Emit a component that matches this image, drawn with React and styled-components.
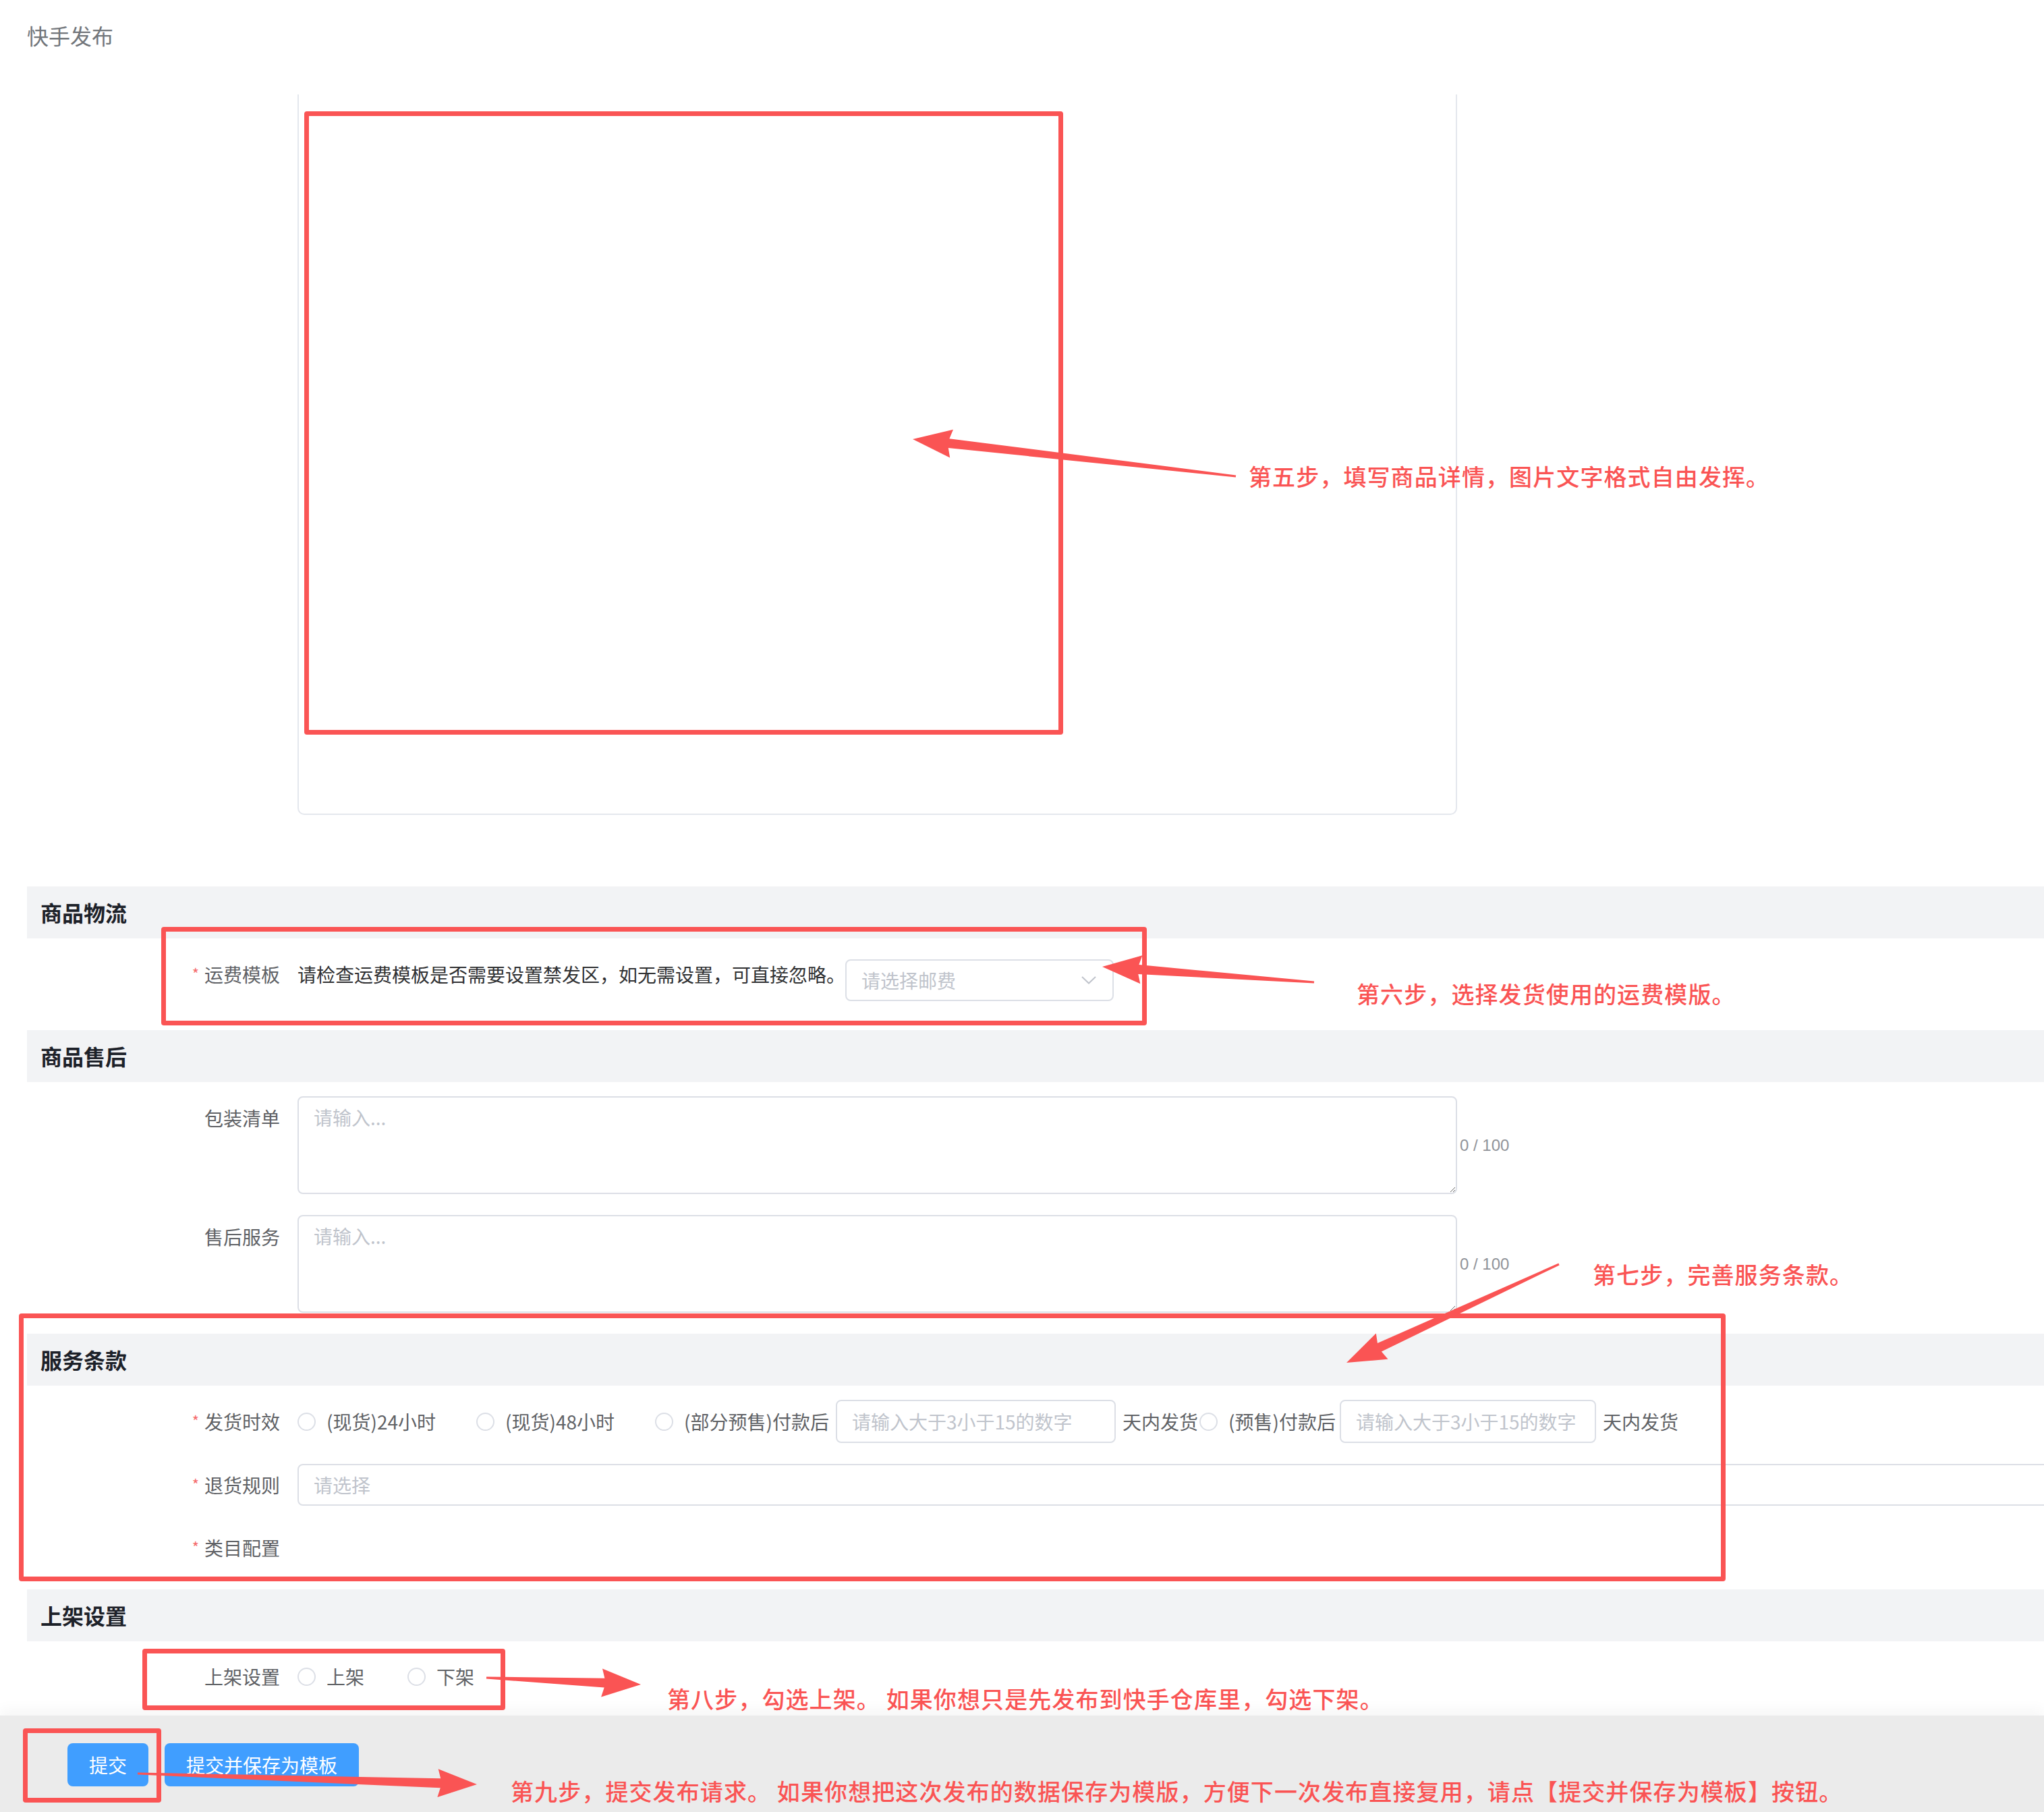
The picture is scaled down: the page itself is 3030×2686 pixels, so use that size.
import React from "react";
import styled, { createGlobalStyle } from "styled-components";

const GlobalStyle = createGlobalStyle`
  html, body {
    margin: 0;
    padding: 0;
    background: #fff;
  }
  * {
    box-sizing: border-box;
  }
`;

const RED = "#fa5454";

const Page = styled.div`
  position: relative;
  width: 3030px;
  min-height: 2686px;
  overflow: hidden;
  font-family: "Noto Sans CJK SC", "Noto Sans", sans-serif;
  color: #606266;
`;

const PageTitle = styled.div`
  height: 140px;
  padding: 30px 0 0 40px;
  font-size: 32px;
  line-height: 44px;
  color: #72767b;
`;

const EditorBox = styled.div`
  margin-left: 441px;
  width: 1719px;
  height: 1068px;
  border: 2px solid #e4e7ed;
  border-top: none;
  border-radius: 0 0 10px 10px;
`;

const Section = styled.section`
  margin-left: 40px;
  margin-top: ${(p) => p.$offset || 0}px;
`;

const SectionHead = styled.div`
  height: 77px;
  padding-left: 20px;
  background: #f2f3f5;
  font-size: 32px;
  font-weight: 700;
  line-height: 77px;
  color: #1d2129;
`;

const SectionBody = styled.div`
  padding: ${(p) => p.$top}px 0 ${(p) => p.$bottom}px;
  display: flex;
  flex-direction: column;
  gap: 31px;
`;

const FormItem = styled.div`
  display: flex;
  align-items: ${(p) => (p.$top ? "flex-start" : "center")};
  height: ${(p) => (p.$height ? `${p.$height}px` : "auto")};
  min-height: 62px;
`;

const Label = styled.div`
  flex: 0 0 401px;
  height: 64px;
  padding-right: 26px;
  text-align: right;
  font-size: 28px;
  line-height: 64px;
  color: #606266;
  white-space: nowrap;
`;

const Star = styled.span`
  position: relative;
  top: -4px;
  margin-right: 8px;
  color: #f56c6c;
  font-size: 22px;
  line-height: 1;
`;

const Content = styled.div`
  flex: 1;
  display: flex;
  align-items: ${(p) => (p.$top ? "flex-start" : "center")};
  min-width: 0;
  font-size: 28px;
`;

const Hint = styled.span`
  color: #303133;
  font-size: 28px;
  line-height: 64px;
  white-space: nowrap;
`;

const Select = styled.div`
  width: 398px;
  height: 62px;
  margin-top: 10px;
  padding: 0 24px 0 22px;
  display: flex;
  align-items: center;
  justify-content: space-between;
  border: 2px solid #dcdfe6;
  border-radius: 8px;
  color: #c0c4cc;
  font-size: 28px;
`;

const TextArea = styled.textarea`
  width: 1719px;
  height: 145px;
  padding: 8px 22px;
  border: 2px solid #dcdfe6;
  border-radius: 8px;
  font-family: inherit;
  font-size: 28px;
  line-height: 42px;
  color: #606266;
  resize: vertical;
  outline: none;

  &::placeholder {
    color: #c0c4cc;
  }
`;

const Counter = styled.span`
  margin-left: 4px;
  font-family: "Liberation Sans", sans-serif;
  font-size: 24px;
  color: #909399;
`;

const Input = styled.input`
  width: ${(p) => (p.$width ? `${p.$width}px` : "calc(100% + 40px)")};
  flex-shrink: 0;
  height: ${(p) => p.$h || 64}px;
  margin: 0 ${(p) => (p.$width ? 10 : 0)}px 0 ${(p) => p.$left || 0}px;
  padding: 0 22px;
  border: 2px solid #dcdfe6;
  border-radius: 8px;
  font-family: inherit;
  font-size: 28px;
  color: #606266;
  outline: none;

  &::placeholder {
    color: #c0c4cc;
  }
`;

const Radio = styled.label`
  display: inline-flex;
  align-items: center;
  gap: 16px;
  margin-right: ${(p) => p.$gap || 0}px;
  font-size: 28px;
  color: #606266;
  white-space: nowrap;
`;

const RadioDot = styled.span`
  width: 27px;
  height: 27px;
  flex-shrink: 0;
  border: 2px solid #dcdfe6;
  border-radius: 50%;
  background: #fff;
`;

const Plain = styled.span`
  font-size: 28px;
  color: #606266;
  white-space: nowrap;
  margin-right: 2px;
`;

const Footer = styled.div`
  margin-top: 26px;
  height: 143px;
  padding: 41px 0 0 100px;
  display: flex;
  align-items: flex-start;
  gap: 24px;
  background: #ebebeb;
  box-shadow: 0 -10px 18px rgba(0, 0, 0, 0.035);
`;

const Button = styled.button`
  height: 64px;
  padding: 0 32px;
  border: none;
  border-radius: 8px;
  background: #409eff;
  color: #fff;
  font-family: inherit;
  font-size: 28px;
  cursor: pointer;
`;

/* annotation layer drawn over the form */
const Frame = styled.div`
  position: absolute;
  left: ${(p) => p.$x}px;
  top: ${(p) => p.$y}px;
  width: ${(p) => p.$w}px;
  height: ${(p) => p.$h}px;
  border: 7px solid ${RED};
  border-radius: 4px;
  pointer-events: none;
`;

const Note = styled.div`
  position: absolute;
  left: ${(p) => p.$x}px;
  top: ${(p) => p.$y - 24}px;
  line-height: 48px;
  font-size: 34px;
  font-weight: 500;
  letter-spacing: 1.1px;
  color: ${RED};
  white-space: pre;
  pointer-events: none;
`;

const ArrowLayer = styled.svg`
  position: absolute;
  left: 0;
  top: 0;
  pointer-events: none;
`;

const Chevron = () => (
  <svg width="22" height="12" viewBox="0 0 22 12">
    <path d="M1 1 L11 10.5 L21 1" fill="none" stroke="#c0c4cc" strokeWidth="2" />
  </svg>
);

// tapered arrow: thin tail, wide triangular head at the tip
const arrowPoints = ([x0, y0], [x1, y1]) => {
  const len = Math.hypot(x1 - x0, y1 - y0);
  const dx = (x1 - x0) / len;
  const dy = (y1 - y0) / len;
  const nx = -dy;
  const ny = dx;
  const head = 54;
  const half = 21;
  const tail = 1.5;
  const neck = 7;
  const bx = x1 - dx * head;
  const by = y1 - dy * head;
  const pts = [
    [x0 + nx * tail, y0 + ny * tail],
    [bx + nx * neck, by + ny * neck],
    [bx + nx * half - dx * 4, by + ny * half - dy * 4],
    [x1, y1],
    [bx - nx * half - dx * 4, by - ny * half - dy * 4],
    [bx - nx * neck, by - ny * neck],
    [x0 - nx * tail, y0 - ny * tail],
  ];
  return pts.map((p) => p.map((v) => v.toFixed(1)).join(",")).join(" ");
};

const arrows = [
  [[1832, 706], [1353, 651]],
  [[1948, 1456], [1634, 1433]],
  [[2311, 1874], [1996, 2020]],
  [[721, 2487], [950, 2497]],
  [[204, 2629], [707, 2645]],
];

const frames = [
  { x: 451, y: 165, w: 1125, h: 924 },
  { x: 239, y: 1374, w: 1461, h: 146 },
  { x: 28, y: 1947, w: 2530, h: 397 },
  { x: 211, y: 2444, w: 538, h: 91 },
  { x: 34, y: 2562, w: 205, h: 110 },
];

const notes = [
  { x: 1851, y: 706, text: "第五步，填写商品详情，图片文字格式自由发挥。" },
  { x: 2011, y: 1473, text: "第六步，选择发货使用的运费模版。" },
  { x: 2361, y: 1889, text: "第七步，完善服务条款。" },
  { x: 989, y: 2518, text: "第八步，勾选上架。 如果你想只是先发布到快手仓库里，勾选下架。" },
  {
    x: 757,
    y: 2655,
    text: "第九步，提交发布请求。 如果你想把这次发布的数据保存为模版，方便下一次发布直接复用，请点【提交并保存为模板】按钮。",
  },
];

const App = () => {
  return (
    <Page>
      <GlobalStyle />
      <PageTitle>快手发布</PageTitle>
      <EditorBox />

      <Section $offset={106}>
        <SectionHead>商品物流</SectionHead>
        <SectionBody $top={21} $bottom={43}>
          <FormItem $top $height={72}>
            <Label>
              <Star>*</Star>运费模板
            </Label>
            <Content $top>
              <Hint>请检查运费模板是否需要设置禁发区，如无需设置，可直接忽略。</Hint>
              <Select>
                <span>请选择邮费</span>
                <Chevron />
              </Select>
            </Content>
          </FormItem>
        </SectionBody>
      </Section>

      <Section>
        <SectionHead>商品售后</SectionHead>
        <SectionBody $top={21} $bottom={31}>
          <FormItem $top>
            <Label>包装清单</Label>
            <Content>
              <TextArea placeholder="请输入..." />
              <Counter>0 / 100</Counter>
            </Content>
          </FormItem>
          <FormItem $top>
            <Label>售后服务</Label>
            <Content>
              <TextArea placeholder="请输入..." />
              <Counter>0 / 100</Counter>
            </Content>
          </FormItem>
        </SectionBody>
      </Section>

      <Section>
        <SectionHead>服务条款</SectionHead>
        <SectionBody $top={21} $bottom={31}>
          <FormItem $height={64}>
            <Label>
              <Star>*</Star>发货时效
            </Label>
            <Content>
              <Radio $gap={60}>
                <RadioDot />
                (现货)24小时
              </Radio>
              <Radio $gap={60}>
                <RadioDot />
                (现货)48小时
              </Radio>
              <Radio>
                <RadioDot />
                (部分预售)付款后
              </Radio>
              <Input $width={415} $left={10} placeholder="请输入大于3小于15的数字" />
              <Plain>天内发货</Plain>
              <Radio>
                <RadioDot />
                (预售)付款后
              </Radio>
              <Input $width={380} $left={6} placeholder="请输入大于3小于15的数字" />
              <Plain>天内发货</Plain>
            </Content>
          </FormItem>
          <FormItem $height={62}>
            <Label>
              <Star>*</Star>退货规则
            </Label>
            <Content>
              <Input $h={62} placeholder="请选择" />
            </Content>
          </FormItem>
          <FormItem $height={62}>
            <Label>
              <Star>*</Star>类目配置
            </Label>
          </FormItem>
        </SectionBody>
      </Section>

      <Section>
        <SectionHead>上架设置</SectionHead>
        <SectionBody $top={20} $bottom={0}>
          <FormItem $height={64}>
            <Label>上架设置</Label>
            <Content>
              <Radio $gap={64}>
                <RadioDot />
                上架
              </Radio>
              <Radio>
                <RadioDot />
                下架
              </Radio>
            </Content>
          </FormItem>
        </SectionBody>
      </Section>

      <Footer>
        <Button>提交</Button>
        <Button>提交并保存为模板</Button>
      </Footer>

      {frames.map((f, i) => (
        <Frame key={i} $x={f.x} $y={f.y} $w={f.w} $h={f.h} />
      ))}
      <ArrowLayer width="3030" height="2686" viewBox="0 0 3030 2686">
        {arrows.map(([from, to], i) => (
          <polygon key={i} points={arrowPoints(from, to)} fill={RED} />
        ))}
      </ArrowLayer>
      {notes.map((n, i) => (
        <Note key={i} $x={n.x} $y={n.y}>
          {n.text}
        </Note>
      ))}
    </Page>
  );
};

export default App;
